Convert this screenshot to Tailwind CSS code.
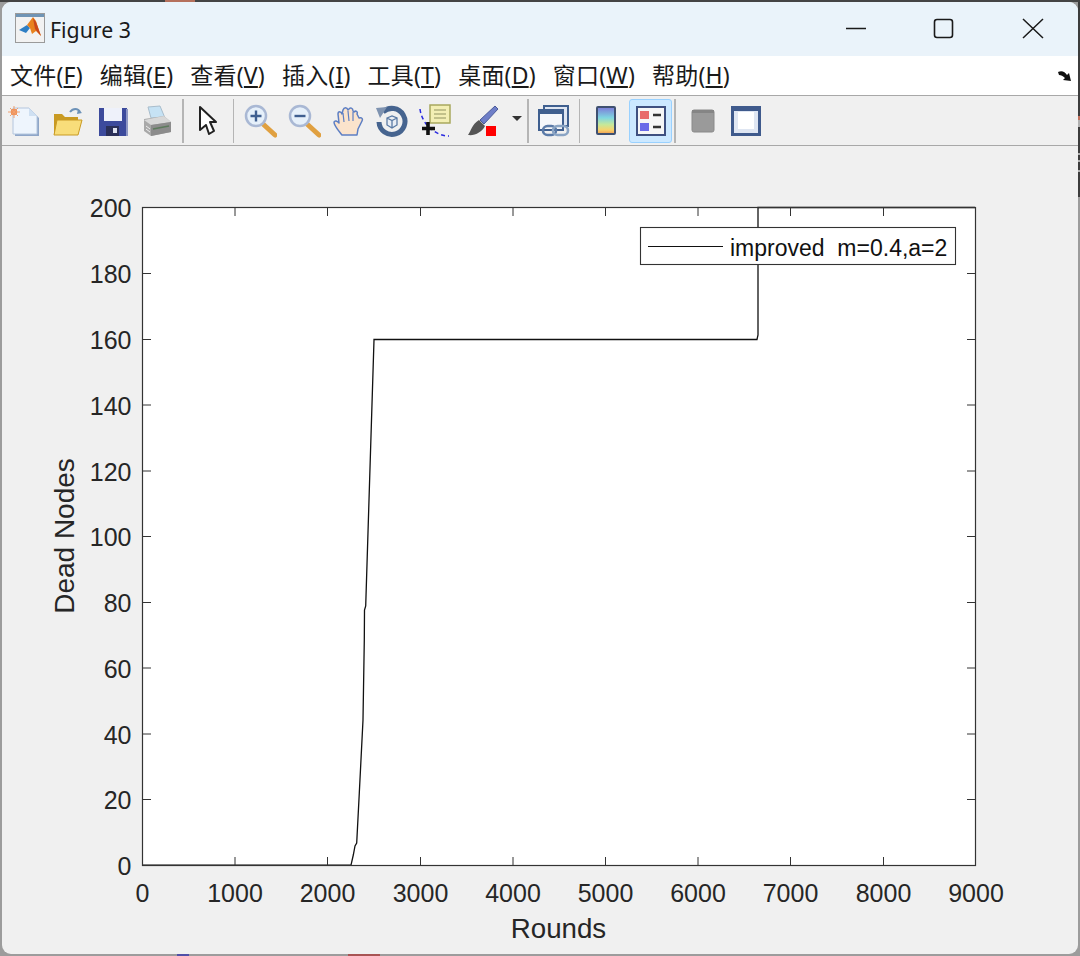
<!DOCTYPE html>
<html lang="zh">
<head>
  <meta charset="UTF-8" />
  <title>Figure 3</title>
  <script src="https://cdn.jsdelivr.net/npm/@tailwindcss/browser@4"></script>
</head>
<body class="relative w-[1080px] h-[956px] overflow-hidden bg-[#9c9c9c] pt-[2px] px-[2px]">
  <!-- bits of the desktop showing round the window -->
  <div class="absolute top-0 left-0 w-full h-[2px] bg-[#444444]"></div>
  <div class="absolute top-0 left-[165px] w-[30px] h-[2px] bg-[#b5705c]"></div>
  <div class="absolute top-[2px] right-0 w-[2px] h-[195px] bg-[#3c3c3c]"></div>
  <div class="absolute top-[116px] right-0 w-[2px] h-[4px] bg-[#c0705c]"></div>
  <div class="absolute top-[120px] right-0 w-[2px] h-[7px] bg-[#b0b0b0]"></div>
  <div class="absolute top-[153px] right-0 w-[2px] h-[2px] bg-[#b0b0b0]"></div>
  <div class="absolute top-[160px] right-0 w-[2px] h-[2px] bg-[#b0b0b0]"></div>
  <div class="absolute top-[170px] right-0 w-[2px] h-[2px] bg-[#b0b0b0]"></div>
  <div class="absolute bottom-0 left-[177px] w-[12px] h-[2px] bg-[#5050a8]"></div>
  <div class="absolute bottom-0 left-[348px] w-[32px] h-[2px] bg-[#a85454]"></div>

  <div class="relative w-[1076px] h-[952px] bg-[#f0f0f0] rounded-[9px] overflow-hidden flex flex-col">

    <!-- title bar -->
    <div class="h-[54px] shrink-0 bg-[#eaf3fa] flex items-center pl-[13px]">
      <svg class="w-[30px] h-[30px] shrink-0 -mt-[2px]" viewBox="0 0 30 30">
        <rect x="0.5" y="0.5" width="29" height="29" fill="#f2f2f2" stroke="#9a9a9a"/>
        <rect x="1" y="1" width="28" height="3" fill="#6f94b5"/>
        <path d="M4 17 L12 12 L15 15 L11 20 Z" fill="#2f7fc4"/>
        <path d="M12 12 L18 4 L21 8 L26 23 L21 18 L17 21 L15 15 Z" fill="#e8821e"/>
        <path d="M18 5 L21 9 L26 23 L20 16 Z" fill="#c9471b"/>
      </svg>
      <span class="ml-[5px] text-[21.3px] leading-none text-[#1a1a1a] font-['Noto_Sans',sans-serif] mt-[2px]">Figure 3</span>
      <svg class="ml-auto w-[234px] h-[54px]" viewBox="0 0 234 54" fill="none" stroke="#1a1a1a">
        <path d="M2 26.5 H22" stroke-width="1.6"/>
        <rect x="90.5" y="17.5" width="18" height="18" rx="2.5" stroke-width="1.6"/>
        <path d="M179 17 L199 36 M199 17 L179 36" stroke-width="1.5"/>
      </svg>
    </div>

    <!-- menu bar -->
    <div class="h-[39px] shrink-0 bg-white flex items-center pl-[8px] pr-[5px] gap-[17px] text-[23px] tracking-[0.2px] leading-none text-[#1a1a1a] font-['Noto_Sans','Noto_Sans_CJK_SC',sans-serif]">
      <span>文件(<span class="underline">F</span>)</span>
      <span>编辑(<span class="underline">E</span>)</span>
      <span>查看(<span class="underline">V</span>)</span>
      <span>插入(<span class="underline">I</span>)</span>
      <span>工具(<span class="underline">T</span>)</span>
      <span>桌面(<span class="underline">D</span>)</span>
      <span>窗口(<span class="underline">W</span>)</span>
      <span>帮助(<span class="underline">H</span>)</span>
      <svg class="ml-auto w-[16px] h-[14px]" viewBox="0 0 16 14">
        <path d="M1 3 C5 1 8 3 10 6 L12 4 L14 12 L6 11 L8 9 C6 7 4 6 2 6 Z" fill="#111"/>
      </svg>
    </div>

    <!-- toolbar -->
    <div class="h-[51px] shrink-0 bg-[#f0f0f0] border-y-[1.5px] border-[#a8a8a8] flex items-center">
      <div class="w-[44px] flex justify-center">
        <svg class="w-[32px] h-[32px] blur-[0.4px]" viewBox="0 0 32 32">
          <path d="M7 5 H23 L31 13 V31 H7 Z" fill="#8fa6c8"/>
          <path d="M5 3 H21 L29 11 V29 H5 Z" fill="#eef5fd" stroke="#b4c6de"/>
          <path d="M21 3 V11 H29 Z" fill="#cfe0f2"/>
          <circle cx="6" cy="7" r="3.2" fill="#f08a4b"/>
          <path d="M6 1 V13 M0 7 H12 M2 3 L10 11 M10 3 L2 11" stroke="#f0a070" stroke-width="1"/>
        </svg>
      </div>
      <div class="w-[44px] flex justify-center">
        <svg class="w-[32px] h-[32px] blur-[0.4px]" viewBox="0 0 32 32">
          <path d="M18 7 C21 3 26 3 28 7" fill="none" stroke="#6d92b8" stroke-width="2"/>
          <path d="M26 4 L30 8 L25 9 Z" fill="#6d92b8"/>
          <path d="M2 9 H10 L13 12 H26 V29 H2 Z" fill="#c99a22"/>
          <path d="M5 15 H30 L26 30 H2 Z" fill="#f8dd7a" stroke="#c99a22"/>
        </svg>
      </div>
      <div class="w-[45px] flex justify-center">
        <svg class="w-[32px] h-[32px] blur-[0.4px]" viewBox="0 0 32 32">
          <rect x="2" y="3" width="28" height="28" fill="#3c4a9c"/>
          <rect x="7" y="3" width="18" height="13" fill="#eef1fa"/>
          <rect x="9" y="21" width="13" height="10" fill="#2a2f58"/>
          <rect x="16" y="23" width="4" height="5" fill="#dfe3f0"/>
          <rect x="29" y="4" width="2" height="27" fill="#8e97c4"/>
        </svg>
      </div>
      <div class="w-[44px] flex justify-center">
        <svg class="w-[32px] h-[32px] blur-[0.4px]" viewBox="0 0 32 32">
          <path d="M7 2 L19 1 L24 13 L10 13 Z" fill="#c6e2f4" stroke="#a8bccb"/>
          <path d="M3 14 L23 11 L30 17 V27 L10 31 L3 26 Z" fill="#a9a9a9"/>
          <path d="M3 15 L10 20 L30 17 L23 11 Z" fill="#d8d8d8"/>
          <path d="M10 20 V31 L30 27 V17 Z" fill="#8c8c8c"/>
          <path d="M12 24 L28 21" stroke="#5c7a5c" stroke-width="1.5"/>
          <path d="M5 21 L9 24 M5 24 L9 27" stroke="#eee" stroke-width="1"/>
        </svg>
      </div>
      <div class="w-[1.5px] h-[44px] bg-[#b5b5b5] ml-[3px]"></div>
      <div class="w-[49px] flex justify-center">
        <svg class="w-[22px] h-[32px]" viewBox="0 0 22 32">
          <path d="M3 2 L19 17 H13 L17 26 L12 29 L9 20 L3 25 Z" fill="#fff" stroke="#222" stroke-width="2" stroke-linejoin="round"/>
        </svg>
      </div>
      <div class="w-[1.5px] h-[44px] bg-[#b5b5b5]"></div>
      <div class="w-[44px] flex justify-center ml-[4px]">
        <svg class="w-[34px] h-[34px] blur-[0.4px]" viewBox="0 0 34 34">
          <path d="M20 20 L32 31" stroke="#e0a040" stroke-width="5" stroke-linecap="round"/>
          <circle cx="13" cy="12" r="10" fill="#e6f0fa" stroke="#a9b8d4" stroke-width="2.5"/>
          <path d="M7.5 12 H18.5 M13 6.5 V17.5" stroke="#3f5f90" stroke-width="2.4"/>
        </svg>
      </div>
      <div class="w-[44px] flex justify-center">
        <svg class="w-[34px] h-[34px] blur-[0.4px]" viewBox="0 0 34 34">
          <path d="M20 20 L32 31" stroke="#e0a040" stroke-width="5" stroke-linecap="round"/>
          <circle cx="13" cy="12" r="10" fill="#e6f0fa" stroke="#a9b8d4" stroke-width="2.5"/>
          <path d="M7.5 12 H18.5" stroke="#3f5f90" stroke-width="2.4"/>
        </svg>
      </div>
      <div class="w-[44px] flex justify-center">
        <svg class="w-[32px] h-[32px] blur-[0.4px]" viewBox="0 0 32 32">
          <path d="M10 30 C7 26 2 21 2 17 C3 15 5 16 7 18 L6 9 C6 6 9 6 10 9 L11 5 C12 2 15 2 16 5 L17 4 C18 2 21 3 21 6 L22 7 C24 5 26 7 25 9 L27 13 C30 12 31 14 30 16 L26 24 L25 30 Z" fill="#fbe3cc" stroke="#5d7fc4" stroke-width="1.5" stroke-linejoin="round"/>
          <path d="M11 8 L12 17 M16 6 L17 16 M21 7 L21 16" stroke="#5d7fc4" stroke-width="1.2" fill="none"/>
        </svg>
      </div>
      <div class="w-[44px] flex justify-center">
        <svg class="w-[32px] h-[32px] blur-[0.4px]" viewBox="0 0 32 32">
          <path d="M7 7 A13 13 0 1 1 3 17" fill="none" stroke="#46648f" stroke-width="5"/>
          <path d="M0 3 L11 2 L4 13 Z" fill="#7f93b0"/>
          <path d="M11 13 L16 11 L21 13 V20 L16 23 L11 20 Z M11 13 L16 15.5 L21 13 M16 15.5 V23" fill="#e9eef5" stroke="#5a7aa4" stroke-width="1.3"/>
        </svg>
      </div>
      <div class="w-[44px] flex justify-center">
        <svg class="w-[34px] h-[34px] blur-[0.3px]" viewBox="0 0 34 34">
          <rect x="11" y="1" width="20" height="18" fill="#f3efb4" stroke="#a8a85e" stroke-width="1.5"/>
          <path d="M15 6 H27 M15 10 H27 M15 14 H27" stroke="#b3b37c" stroke-width="1.3"/>
          <path d="M1 5 C2 13 6 20 12 25 C17 29 23 32 30 32" fill="none" stroke="#2a2ae0" stroke-width="1.5" stroke-dasharray="4 3"/>
          <path d="M9 18 V31 M3 24.5 H16" stroke="#111" stroke-width="3.6"/>
        </svg>
      </div>
      <div class="w-[46px] flex justify-center ml-[2px]">
        <svg class="w-[32px] h-[32px] blur-[0.3px]" viewBox="0 0 32 32">
          <path d="M28 1 L31 4 L17 19 L13 15 Z" fill="#6f7fc8" stroke="#4a5a9a"/>
          <path d="M12 15 L18 21 C15 27 8 31 1 30 C4 26 5 19 12 15 Z" fill="#555"/>
          <rect x="19" y="21" width="10" height="10" fill="#ff0000"/>
        </svg>
      </div>
      <div class="w-0 h-0 border-x-[5px] border-x-transparent border-t-[5px] border-t-[#333] ml-[6px] -mt-[4px]"></div>
      <div class="w-[1.5px] h-[44px] bg-[#b5b5b5] ml-[5px]"></div>
      <div class="w-[50px] flex justify-center">
        <svg class="w-[32px] h-[32px] blur-[0.4px]" viewBox="0 0 32 32">
          <rect x="6" y="1" width="24" height="20" fill="#dfe6f2" stroke="#3f5f8f" stroke-width="2"/>
          <rect x="1" y="5" width="24" height="20" fill="#f4f6fa" stroke="#3f5f8f" stroke-width="2"/>
          <rect x="1" y="5" width="24" height="4" fill="#3f5f8f"/>
          <rect x="5" y="21" width="13" height="9" rx="4.5" fill="none" stroke="#5a7aa8" stroke-width="2.6"/>
          <rect x="15" y="21" width="15" height="9" rx="4.5" fill="none" stroke="#8aa4c4" stroke-width="2.6"/>
        </svg>
      </div>
      <div class="w-[1.5px] h-[44px] bg-[#b5b5b5]"></div>
      <div class="w-[50px] flex justify-center ml-[1px]">
        <svg class="w-[21px] h-[30px] blur-[0.3px]" viewBox="0 0 21 30">
          <defs>
            <linearGradient id="cb" x1="0" y1="0" x2="0" y2="1">
              <stop offset="0" stop-color="#7c78d8"/>
              <stop offset="0.4" stop-color="#7fd6e0"/>
              <stop offset="0.65" stop-color="#c5e89a"/>
              <stop offset="0.85" stop-color="#f7d36c"/>
              <stop offset="1" stop-color="#f09a50"/>
            </linearGradient>
          </defs>
          <rect x="1" y="1" width="18" height="27" rx="1" fill="url(#cb)" stroke="#3f5070" stroke-width="2"/>
        </svg>
      </div>
      <div class="w-[43px] h-[44px] -ml-[2px] flex items-center justify-center rounded-[3px] bg-[#cce8ff] border border-[#99d1ff]">
        <svg class="w-[30px] h-[30px] blur-[0.3px]" viewBox="0 0 30 30">
          <rect x="1" y="1" width="28" height="28" fill="#f6f6f6" stroke="#3f5080" stroke-width="2"/>
          <rect x="4" y="5" width="9" height="8" fill="#e86a6a"/>
          <rect x="4" y="17" width="9" height="8" fill="#6a6ae8"/>
          <path d="M17 9 H25 M17 21 H25" stroke="#333" stroke-width="2.4"/>
        </svg>
      </div>
      <div class="w-[1.5px] h-[44px] bg-[#b5b5b5] ml-[2px]"></div>
      <div class="w-[54px] flex justify-center">
        <svg class="w-[24px] h-[24px] blur-[0.4px]" viewBox="0 0 24 24">
          <rect x="1" y="1" width="22" height="22" rx="2" fill="#9a9a9a" stroke="#8a8a8a"/>
          <rect x="1" y="1" width="22" height="3" fill="#858585"/>
        </svg>
      </div>
      <div class="w-[32px] flex justify-center">
        <svg class="w-[30px] h-[30px] blur-[0.3px]" viewBox="0 0 30 30">
          <rect x="1.5" y="1.5" width="27" height="27" fill="#dfe6f2" stroke="#3f5a8c" stroke-width="3"/>
          <rect x="1" y="1" width="28" height="4" fill="#3f5a8c"/>
          <rect x="7" y="6" width="16" height="17" fill="#fff"/>
        </svg>
      </div>
    </div>

    <!-- figure canvas -->
    <div class="flex-1 min-h-0">
      <svg class="block w-[1076px] h-[808px] font-['Liberation_Sans',sans-serif] text-[25px] fill-[#262626]" viewBox="2 146 1076 808">
        <rect x="142.5" y="207.5" width="833" height="658" fill="#fff"/>

        <!-- curve -->
        <path d="M142.5 865.2 H351 L353.3 855 L355 846 L356.7 843 L359.3 793 L363 720 L364.3 640 L364.5 610 L365.7 606 L374 340 V339.5 H757 L758 335 V207.5 H975" fill="none" stroke="#111" stroke-width="1.3"/>

        <!-- ticks -->
        <path fill="none" stroke="#333" stroke-width="1" d="
          M235 865 v-8 M327.5 865 v-8 M420.5 865 v-8 M513 865 v-8 M605.5 865 v-8 M698 865 v-8 M790.5 865 v-8 M883.5 865 v-8
          M235 208 v8 M327.5 208 v8 M420.5 208 v8 M513 208 v8 M605.5 208 v8 M698 208 v8 M790.5 208 v8 M883.5 208 v8
          M143 799.5 h8 M143 734 h8 M143 668 h8 M143 602.5 h8 M143 536.5 h8 M143 471 h8 M143 405 h8 M143 339.5 h8 M143 273.5 h8
          M975 799.5 h-8 M975 734 h-8 M975 668 h-8 M975 602.5 h-8 M975 536.5 h-8 M975 471 h-8 M975 405 h-8 M975 339.5 h-8 M975 273.5 h-8"/>
        <rect x="142.5" y="207.5" width="833" height="658" fill="none" stroke="#333" stroke-width="1.2"/>

        <!-- y labels -->
        <g text-anchor="end">
          <text x="131.5" y="875">0</text>
          <text x="131.5" y="809">20</text>
          <text x="131.5" y="744">40</text>
          <text x="131.5" y="678">60</text>
          <text x="131.5" y="612">80</text>
          <text x="131.5" y="546">100</text>
          <text x="131.5" y="481">120</text>
          <text x="131.5" y="415">140</text>
          <text x="131.5" y="349">160</text>
          <text x="131.5" y="283">180</text>
          <text x="131.5" y="217">200</text>
        </g>

        <!-- x labels -->
        <g text-anchor="middle">
          <text x="142.5" y="902">0</text>
          <text x="235" y="902">1000</text>
          <text x="327.5" y="902">2000</text>
          <text x="420.5" y="902">3000</text>
          <text x="513" y="902">4000</text>
          <text x="605.5" y="902">5000</text>
          <text x="698" y="902">6000</text>
          <text x="790.5" y="902">7000</text>
          <text x="883.5" y="902">8000</text>
          <text x="976" y="902">9000</text>
        </g>

        <text x="558.5" y="938" text-anchor="middle" class="text-[27.7px]">Rounds</text>
        <text transform="translate(74 536) rotate(-90)" text-anchor="middle" class="text-[28px]">Dead Nodes</text>

        <!-- legend -->
        <rect x="640.5" y="227.5" width="315" height="37" fill="#fff" stroke="#333" stroke-width="1.1"/>
        <path d="M648 246.5 H723" stroke="#111" stroke-width="1.1"/>
        <text x="730" y="256" class="text-[23px] fill-[#111]" xml:space="preserve">improved&#160;&#160;m=0.4,a=2</text>
      </svg>
    </div>
  </div>
</body>
</html>
